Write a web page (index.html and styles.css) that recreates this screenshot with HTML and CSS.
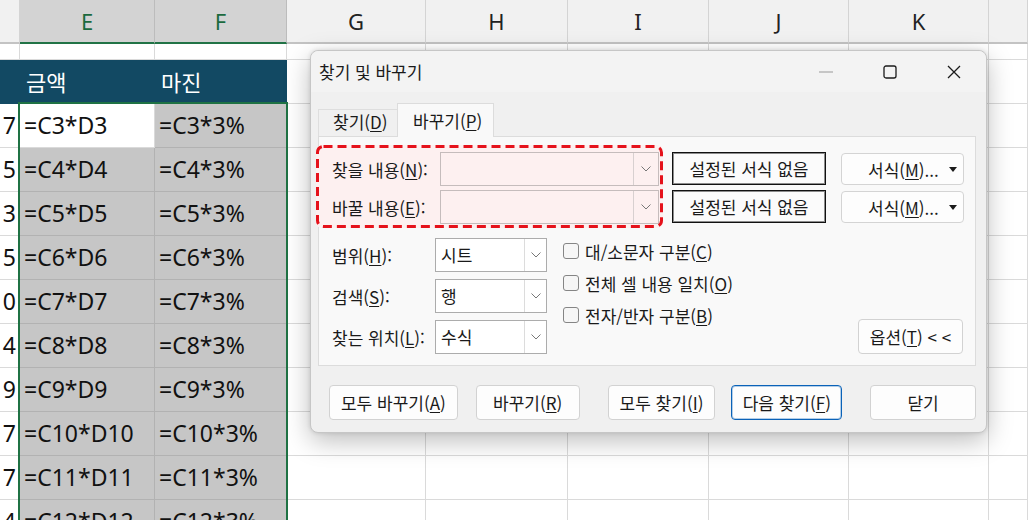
FILE: index.html
```html
<!DOCTYPE html>
<html lang="ko">
<head>
<meta charset="utf-8">
<title>찾기 및 바꾸기</title>
<link rel="stylesheet" href="styles.css">
</head>
<body>
<div class="sheet">
  <div class="grid">
    <div class="hd"></div><div class="hd hs">E</div><div class="hd hs">F</div><div class="hd">G</div><div class="hd">H</div><div class="hd">I</div><div class="hd">J</div><div class="hd">K</div><div class="hd"></div>
    <div class="w"></div><div class="w"></div><div class="w"></div><div class="w"></div><div class="w"></div><div class="w"></div><div class="w"></div><div class="w"></div><div class="w"></div>
    <div class="tl"></div><div class="tl">금액</div><div class="tl">마진</div><div class="w"></div><div class="w"></div><div class="w"></div><div class="w"></div><div class="w"></div><div class="w"></div>
    <div class="dg">7</div><div class="a">=C3*D3</div><div class="g">=C3*3%</div><div class="w"></div><div class="w"></div><div class="w"></div><div class="w"></div><div class="w"></div><div class="w"></div>
    <div class="dg">5</div><div class="g">=C4*D4</div><div class="g">=C4*3%</div><div class="w"></div><div class="w"></div><div class="w"></div><div class="w"></div><div class="w"></div><div class="w"></div>
    <div class="dg">3</div><div class="g">=C5*D5</div><div class="g">=C5*3%</div><div class="w"></div><div class="w"></div><div class="w"></div><div class="w"></div><div class="w"></div><div class="w"></div>
    <div class="dg">5</div><div class="g">=C6*D6</div><div class="g">=C6*3%</div><div class="w"></div><div class="w"></div><div class="w"></div><div class="w"></div><div class="w"></div><div class="w"></div>
    <div class="dg">0</div><div class="g">=C7*D7</div><div class="g">=C7*3%</div><div class="w"></div><div class="w"></div><div class="w"></div><div class="w"></div><div class="w"></div><div class="w"></div>
    <div class="dg">4</div><div class="g">=C8*D8</div><div class="g">=C8*3%</div><div class="w"></div><div class="w"></div><div class="w"></div><div class="w"></div><div class="w"></div><div class="w"></div>
    <div class="dg">9</div><div class="g">=C9*D9</div><div class="g">=C9*3%</div><div class="w"></div><div class="w"></div><div class="w"></div><div class="w"></div><div class="w"></div><div class="w"></div>
    <div class="dg">7</div><div class="g">=C10*D10</div><div class="g">=C10*3%</div><div class="w"></div><div class="w"></div><div class="w"></div><div class="w"></div><div class="w"></div><div class="w"></div>
    <div class="dg">7</div><div class="g">=C11*D11</div><div class="g">=C11*3%</div><div class="w"></div><div class="w"></div><div class="w"></div><div class="w"></div><div class="w"></div><div class="w"></div>
    <div class="dg">4</div><div class="g">=C12*D12</div><div class="g">=C12*3%</div><div class="w"></div><div class="w"></div><div class="w"></div><div class="w"></div><div class="w"></div><div class="w"></div>
  </div>
  <div class="selection"></div>

  <div class="dialog">
    <div class="titlebar">
      <span class="title">찾기 및 바꾸기</span>
      <div class="winctl">
        <span><svg width="14" height="2" viewBox="0 0 14 2"><line x1="0" y1="1" x2="14" y2="1" stroke="#a8a8a8" stroke-width="1.2"/></svg></span>
        <span><svg width="14" height="14" viewBox="0 0 14 14"><rect x="1" y="1" width="12" height="12" rx="2" fill="none" stroke="#1b1b1b" stroke-width="1.3"/></svg></span>
        <span><svg width="14" height="14" viewBox="0 0 14 14"><path d="M1 1 L13 13 M13 1 L1 13" stroke="#1b1b1b" stroke-width="1.3"/></svg></span>
      </div>
    </div>
    <div class="body">
      <div class="tabs">
        <div class="tab">찾기(<u>D</u>)</div>
        <div class="tab active">바꾸기(<u>P</u>)</div>
      </div>
      <div class="panel">
        <div class="toprow">
          <div class="findbox">
            <svg class="dash" width="347" height="83" viewBox="0 0 347 83"><rect x="1.5" y="1.5" width="344" height="80" rx="6" fill="none" stroke="#e5121b" stroke-width="3" stroke-dasharray="9 5"/></svg>
            <div class="frow"><label>찾을 내용(<u>N</u>):</label><div class="combo"><span class="dd"><svg width="10" height="6" viewBox="0 0 10 6"><polyline points="0.5,0.5 5,5 9.5,0.5" fill="none" stroke="#777" stroke-width="1"/></svg></span></div></div>
            <div class="frow"><label>바꿀 내용(<u>E</u>):</label><div class="combo"><span class="dd"><svg width="10" height="6" viewBox="0 0 10 6"><polyline points="0.5,0.5 5,5 9.5,0.5" fill="none" stroke="#777" stroke-width="1"/></svg></span></div></div>
          </div>
          <div class="fmtcol">
            <button class="nofmt">설정된 서식 없음</button>
            <button class="nofmt">설정된 서식 없음</button>
          </div>
          <div class="fmtcol2">
            <button class="fmt"><span>서식(<u>M</u>)...</span><svg width="8" height="5" viewBox="0 0 8 5"><polygon points="0,0 8,0 4,5" fill="#1b1b1b"/></svg></button>
            <button class="fmt"><span>서식(<u>M</u>)...</span><svg width="8" height="5" viewBox="0 0 8 5"><polygon points="0,0 8,0 4,5" fill="#1b1b1b"/></svg></button>
          </div>
        </div>
        <div class="midrow">
          <div class="opts">
            <div class="orow"><label>범위(<u>H</u>):</label><div class="sel"><span class="v">시트</span><span class="dd"><svg width="10" height="6" viewBox="0 0 10 6"><polyline points="0.5,0.5 5,5 9.5,0.5" fill="none" stroke="#777" stroke-width="1"/></svg></span></div></div>
            <div class="orow"><label>검색(<u>S</u>):</label><div class="sel"><span class="v">행</span><span class="dd"><svg width="10" height="6" viewBox="0 0 10 6"><polyline points="0.5,0.5 5,5 9.5,0.5" fill="none" stroke="#777" stroke-width="1"/></svg></span></div></div>
            <div class="orow"><label>찾는 위치(<u>L</u>):</label><div class="sel"><span class="v">수식</span><span class="dd"><svg width="10" height="6" viewBox="0 0 10 6"><polyline points="0.5,0.5 5,5 9.5,0.5" fill="none" stroke="#777" stroke-width="1"/></svg></span></div></div>
          </div>
          <div class="checks">
            <div class="chk"><span class="box"></span><span>대/소문자 구분(<u>C</u>)</span></div>
            <div class="chk"><span class="box"></span><span>전체 셀 내용 일치(<u>O</u>)</span></div>
            <div class="chk"><span class="box"></span><span>전자/반자 구분(<u>B</u>)</span></div>
          </div>
          <button class="btn optbtn">옵션(<u>T</u>) &lt; &lt;</button>
        </div>
      </div>
      <div class="btnrow">
        <button class="btn b1">모두 바꾸기(<u>A</u>)</button>
        <button class="btn b2">바꾸기(<u>R</u>)</button>
        <button class="btn b3">모두 찾기(<u>I</u>)</button>
        <button class="btn b4 default">다음 찾기(<u>F</u>)</button>
        <button class="btn b5">닫기</button>
      </div>
    </div>
  </div>
</div>
</body>
</html>
```

FILE: styles.css
```css
body {
  margin: 0;
  background: #fff;
}

.sheet {
  position: relative;
  width: 1028px;
  height: 520px;
  overflow: hidden;
  background: #fff;
  font-family: "Noto Sans", "Noto Sans CJK KR", sans-serif;
  color: #111;
}

.grid {
  display: grid;
  grid-template-columns: 20px 135px 132px 139px 142px 141px 140px 140px 1fr;
  grid-template-rows: 44px 16px 44px repeat(10, 44px);
}

.grid > div {
  box-sizing: border-box;
  border-right: 1px solid #dadada;
  border-bottom: 1px solid #dadada;
  font-size: 23px;
  line-height: 43px;
  white-space: nowrap;
  overflow: hidden;
}

.grid > .hd {
  background: #f1f1f1;
  border-right-color: #d4d4d4;
  border-bottom: 2px solid #c3c3c3;
  text-align: center;
  font-size: 22px;
  line-height: 42px;
  color: #222;
}

.grid > .hs {
  background: #d3d3d3;
  color: #1b6a3e;
  border-right-color: #bcbcbc;
  border-bottom-color: #217346;
}

.grid > .tl {
  background: #124963;
  color: #fff;
  border: none;
  padding-left: 6px;
  font-family: "Noto Sans CJK KR", sans-serif;
  font-size: 22px;
}

.grid > .g {
  background: #c6c6c6;
  border-color: #b2b2b2;
  padding-left: 4px;
}

.grid > .a {
  background: #fff;
  padding-left: 4px;
}

.grid > .dg {
  text-align: right;
  padding-right: 3px;
}

.selection {
  position: absolute;
  left: 18px;
  top: 102px;
  width: 270px;
  height: 440px;
  box-sizing: border-box;
  border: 2px solid #1f7244;
  pointer-events: none;
}

/* dialog */
.dialog {
  position: absolute;
  left: 310px;
  top: 50px;
  width: 677px;
  height: 383px;
  box-sizing: border-box;
  background: #f0f0f0;
  border: 1px solid #c6c6c6;
  border-radius: 8px;
  box-shadow: 0 8px 26px rgba(0, 0, 0, 0.26), 0 0 4px rgba(0, 0, 0, 0.12);
  font-family: "Noto Sans CJK KR", sans-serif;
  font-size: 17px;
  color: #1a1a1a;
  display: flex;
  flex-direction: column;
}

.dialog u {
  text-underline-offset: 2px;
  text-decoration-thickness: 1px;
}

.titlebar {
  height: 41px;
  display: flex;
  align-items: center;
  background: #f3f3f3;
  border-radius: 8px 8px 0 0;
}

.title {
  padding-left: 8px;
  line-height: 1;
}

.winctl {
  margin-left: auto;
  display: flex;
  height: 100%;
}

.winctl span {
  width: 64px;
  display: flex;
  align-items: center;
  justify-content: center;
}

.body {
  flex: 1;
  display: flex;
  flex-direction: column;
  padding: 11px 10px 0 7px;
}

.tabs {
  display: flex;
  align-items: flex-end;
  height: 34px;
  margin-bottom: -1px;
  position: relative;
  z-index: 1;
}

.tab {
  box-sizing: border-box;
  width: 79px;
  height: 27px;
  margin-bottom: 1px;
  padding-left: 14px;
  line-height: 24px;
  border: 1px solid #dedede;
  border-bottom: none;
  border-right: none;
  background: #f0f0f0;
}

.tab.active {
  width: 97px;
  height: 34px;
  margin-bottom: 0;
  padding-left: 15px;
  line-height: 33px;
  background: #f9f9f9;
  border: 1px solid #dcdcdc;
  border-bottom: none;
}

.panel {
  height: 230px;
  box-sizing: border-box;
  border: 1px solid #dcdcdc;
  background: #f9f9f9;
  padding-top: 8px;
}

.toprow {
  display: flex;
  align-items: flex-start;
}

.findbox {
  position: relative;
  width: 347px;
  height: 83px;
  box-sizing: border-box;
  margin-left: -3px;
  padding: 7px 4px 0 16px;
  background: #fdf0f0;
  border-radius: 6px;
  display: flex;
  flex-direction: column;
  gap: 4px;
}

.dash {
  position: absolute;
  left: 0;
  top: 0;
}

.frow {
  display: flex;
  align-items: center;
  height: 34px;
}

.frow label {
  width: 108px;
  white-space: nowrap;
}

.combo {
  width: 219px;
  height: 34px;
  box-sizing: border-box;
  border: 1px solid #c5bcbc;
  display: flex;
  justify-content: flex-end;
}

.dd {
  width: 24px;
  border-left: 1px solid #d8d0d0;
  display: flex;
  align-items: center;
  justify-content: center;
}

.fmtcol,
.fmtcol2 {
  display: flex;
  flex-direction: column;
}

.fmtcol {
  margin-left: 9px;
  margin-top: 7px;
  gap: 5px;
}

.fmtcol2 {
  margin-left: 15px;
  margin-top: 8px;
  gap: 6px;
}

button {
  font: inherit;
  color: inherit;
  padding: 0;
  margin: 0;
  white-space: nowrap;
}

.nofmt {
  width: 154px;
  height: 33px;
  box-sizing: border-box;
  border: 1px solid #111;
  box-shadow: inset 0 0 0 1px #8c8c8c;
  background: #fbfbfb;
}

.fmt {
  width: 123px;
  height: 32px;
  box-sizing: border-box;
  border: 1px solid #d4d4d4;
  border-radius: 4px;
  background: #fdfdfd;
  display: flex;
  align-items: center;
  padding: 0 6px 0 26px;
}

.fmt svg {
  margin-left: auto;
}

.midrow {
  display: flex;
  margin-top: 10px;
  padding-left: 13px;
}

.opts {
  display: flex;
  flex-direction: column;
  gap: 7px;
}

.orow {
  display: flex;
  align-items: center;
}

.orow label {
  width: 103px;
  white-space: nowrap;
}

.sel {
  width: 112px;
  height: 34px;
  box-sizing: border-box;
  border: 1px solid #acacac;
  background: #fff;
  display: flex;
}

.sel .v {
  flex: 1;
  padding-left: 5px;
  line-height: 32px;
}

.sel .dd {
  width: 21px;
  border-left-color: #dcdcdc;
}

.checks {
  margin-left: 16px;
  margin-top: -3px;
  display: flex;
  flex-direction: column;
}

.chk {
  height: 32px;
  display: flex;
  align-items: center;
  gap: 6px;
  white-space: nowrap;
}

.box {
  width: 16px;
  height: 16px;
  box-sizing: border-box;
  border: 1px solid #858585;
  border-radius: 3px;
  background: #f6f6f6;
}

.btn {
  height: 35px;
  box-sizing: border-box;
  border: 1px solid #d2d2d2;
  border-radius: 4px;
  background: #fdfdfd;
  text-align: center;
}

.optbtn {
  width: 105px;
  margin-left: auto;
  margin-right: 12px;
  align-self: flex-end;
}

.btnrow {
  display: flex;
  margin-top: 19px;
  padding-left: 11px;
}

.b1 { width: 129px; }
.b2 { width: 104px; margin-left: 18px; }
.b3 { width: 108px; margin-left: 28px; }
.b4 { width: 111px; margin-left: 16px; }
.b5 { width: 106px; margin-left: 28px; }

.btn.default {
  border-color: #0a62b8;
  box-shadow: inset 0 0 0 1px rgba(10, 98, 184, 0.3);
}
```
